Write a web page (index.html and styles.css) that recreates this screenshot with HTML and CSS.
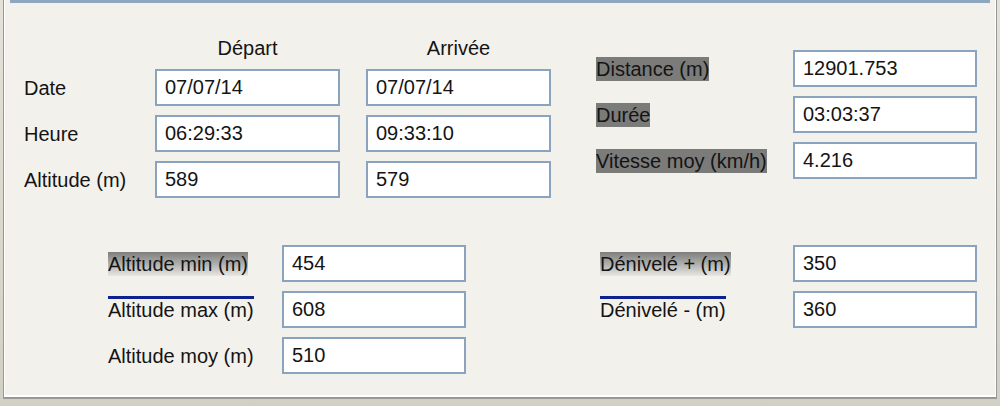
FILE: index.html
```html
<!DOCTYPE html>
<html lang="fr">
<head>
<meta charset="UTF-8">
<title>Statistiques</title>
<link rel="stylesheet" href="styles.css">
</head>
<body>
<div class="window">
  <div class="panel">
    <div class="group-line"></div>
    <div class="top">
      <div class="times">
        <span></span>
        <span class="head">Départ</span>
        <span class="head">Arrivée</span>

        <span class="label">Date</span>
        <div class="field">07/07/14</div>
        <div class="field">07/07/14</div>

        <span class="label">Heure</span>
        <div class="field">06:29:33</div>
        <div class="field">09:33:10</div>

        <span class="label">Altitude (m)</span>
        <div class="field">589</div>
        <div class="field">579</div>
      </div>
      <div class="totals">
        <span class="label"><span class="mark">Distance (m)</span></span>
        <div class="field">12901.753</div>
        <span class="label"><span class="mark">Durée</span></span>
        <div class="field">03:03:37</div>
        <span class="label"><span class="mark">Vitesse moy (km/h)</span></span>
        <div class="field">4.216</div>
      </div>
    </div>
    <div class="bottom">
      <div class="alts">
        <span class="label"><span class="shade">Altitude min (m)</span></span>
        <div class="field">454</div>
        <span class="label"><span class="line">Altitude max (m)</span></span>
        <div class="field">608</div>
        <span class="label">Altitude moy (m)</span>
        <div class="field">510</div>
      </div>
      <div class="climbs">
        <span class="label"><span class="shade">Dénivelé + (m)</span></span>
        <div class="field">350</div>
        <span class="label"><span class="line">Dénivelé - (m)</span></span>
        <div class="field">360</div>
      </div>
    </div>
  </div>
</div>
</body>
</html>
```

FILE: styles.css
```css
body {
  margin: 0;
  font-family: "Liberation Sans", Arial, sans-serif;
  font-size: 20px;
  color: #141414;
  background: #dedbd2;
}
.window {
  width: 1000px;
  height: 406px;
  background: linear-gradient(#e4e1d8, #d2cfc4);
  box-sizing: border-box;
}
.panel {
  height: 399px;
  margin: 0 3px;
  box-sizing: border-box;
  background: #f3f1ec;
  border-left: 1px solid #979795;
  border-right: 1px solid #979795;
  border-bottom: 2px solid #989896;
  box-shadow: inset 0 -2px 0 #fff, inset 1px 0 0 #fff, inset -1px 0 0 #fff;
}
.group-line {
  height: 3px;
  margin: 0 6px;
  background: #8fa6bf;
}
.top {
  display: flex;
  gap: 45px;
  margin-top: 33px;
  padding-left: 20px;
}
.times {
  display: grid;
  grid-template-columns: 105px 185px 185px;
  grid-template-rows: 24px 37px 37px 37px;
  column-gap: 26px;
  row-gap: 9px;
  align-items: center;
}
.head {
  text-align: center;
  line-height: 24px;
}
.totals {
  display: grid;
  grid-template-columns: 197px 184px;
  grid-auto-rows: 37px;
  row-gap: 9px;
  align-items: center;
  margin-top: 14px;
}
.bottom {
  display: flex;
  gap: 134px;
  margin-top: 47px;
  padding-left: 104px;
}
.alts {
  display: grid;
  grid-template-columns: 174px 184px;
  grid-auto-rows: 37px;
  row-gap: 9px;
  align-items: center;
}
.climbs {
  display: grid;
  grid-template-columns: 193px 184px;
  grid-auto-rows: 37px;
  row-gap: 9px;
  align-items: center;
}
.label {
  line-height: 24px;
  white-space: nowrap;
}
.mark {
  display: inline-block;
  background: #7b7b7a;
  line-height: 24px;
}
.shade {
  display: inline-block;
  background: linear-gradient(#7d7d7c, #b4b4b2 55%, #e8e7e3);
  line-height: 24px;
}
.line {
  display: inline-block;
  border-top: 3px solid #0e2190;
  line-height: 22px;
  margin-top: -8px;
}
.field {
  box-sizing: border-box;
  height: 37px;
  border: 2px solid #8aa3be;
  background: #fff;
  padding-left: 8px;
  line-height: 33px;
}
```
